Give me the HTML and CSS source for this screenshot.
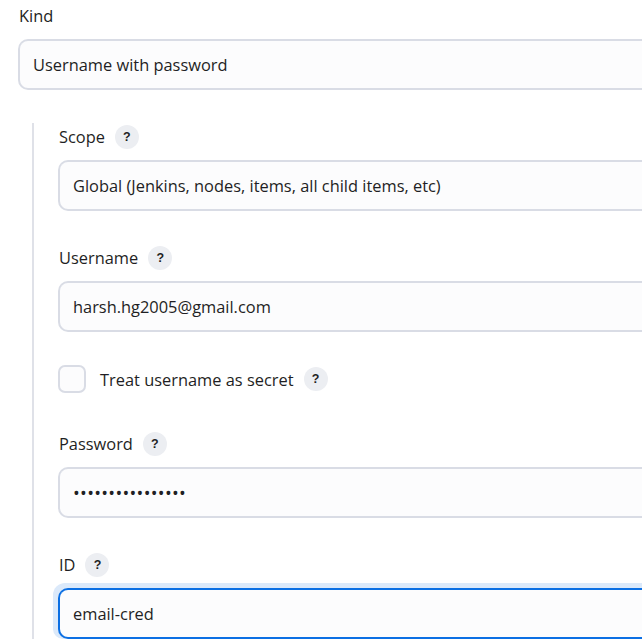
FILE: index.html
```html
<!DOCTYPE html>
<html>
<head>
<meta charset="utf-8">
<link rel="stylesheet" href="styles.css">
</head>
<body>
<div class="page">
  <div class="field">
    <div class="label-row"><span class="label">Kind</span></div>
    <div class="input">Username with password</div>
  </div>
  <div class="nested">
    <div class="field">
      <div class="label-row"><span class="label">Scope</span><span class="help">?</span></div>
      <div class="input">Global (Jenkins, nodes, items, all child items, etc)</div>
    </div>
    <div class="field">
      <div class="label-row"><span class="label">Username</span><span class="help">?</span></div>
      <div class="input">harsh.hg2005@gmail.com</div>
    </div>
    <div class="check-row">
      <span class="checkbox"></span>
      <span class="check-label">Treat username as secret</span>
      <span class="help">?</span>
    </div>
    <div class="field">
      <div class="label-row"><span class="label">Password</span><span class="help">?</span></div>
      <div class="input password">••••••••••••••••</div>
    </div>
    <div class="field last">
      <div class="label-row"><span class="label">ID</span><span class="help">?</span></div>
      <div class="input focused">email-cred</div>
    </div>
  </div>
</div>
</body>
</html>
```

FILE: styles.css
```css
html, body {
  margin: 0;
  padding: 0;
  background: #ffffff;
  overflow: hidden;
}
body {
  font-family: "Open Sans", "Noto Sans", sans-serif;
  font-size: 16.4px;
  color: #1f1f24;
}
.page {
  padding: 4px 0 0 18px;
  height: 635px;
  overflow: hidden;
}
.field {
  margin-bottom: 35px;
}
.field.last {
  margin-bottom: 0;
}
.label-row {
  display: flex;
  align-items: center;
  gap: 10px;
  height: 24px;
  margin-bottom: 11px;
  padding-left: 1px;
}
.label {
  line-height: 24px;
}
.help {
  width: 24px;
  height: 24px;
  border-radius: 50%;
  background: #eceef2;
  display: flex;
  align-items: center;
  justify-content: center;
  font-family: "Liberation Sans", Arial, sans-serif;
  font-size: 12.5px;
  font-weight: 700;
  color: #1f1f24;
}
.input {
  box-sizing: border-box;
  height: 51px;
  border: 2px solid #d9dce5;
  border-right: none;
  border-radius: 10px 0 0 10px;
  background: #fcfcfd;
  padding-left: 13px;
  display: flex;
  align-items: center;
}
.password {
  font-size: 18px;
  letter-spacing: 0.3px;
}
.focused {
  border-color: #0b6fe3;
  box-shadow: -5px 0 0 0 #dbe9fa, 0 -5px 0 0 #dbe9fa, -3px -3px 0 2px #dbe9fa;
}
.nested {
  margin: -2px 0 0 14px;
  border-left: 2px solid #dfe1e8;
  padding: 2px 0 0 24px;
}
.check-row {
  display: flex;
  align-items: center;
  height: 28px;
  margin: -2px 0 39px;
}
.checkbox {
  box-sizing: border-box;
  width: 28px;
  height: 28px;
  border: 2px solid #d9dce5;
  border-radius: 7px;
  background: #fcfcfd;
  margin-right: 14px;
}
.check-label {
  margin-right: 10px;
}
```
